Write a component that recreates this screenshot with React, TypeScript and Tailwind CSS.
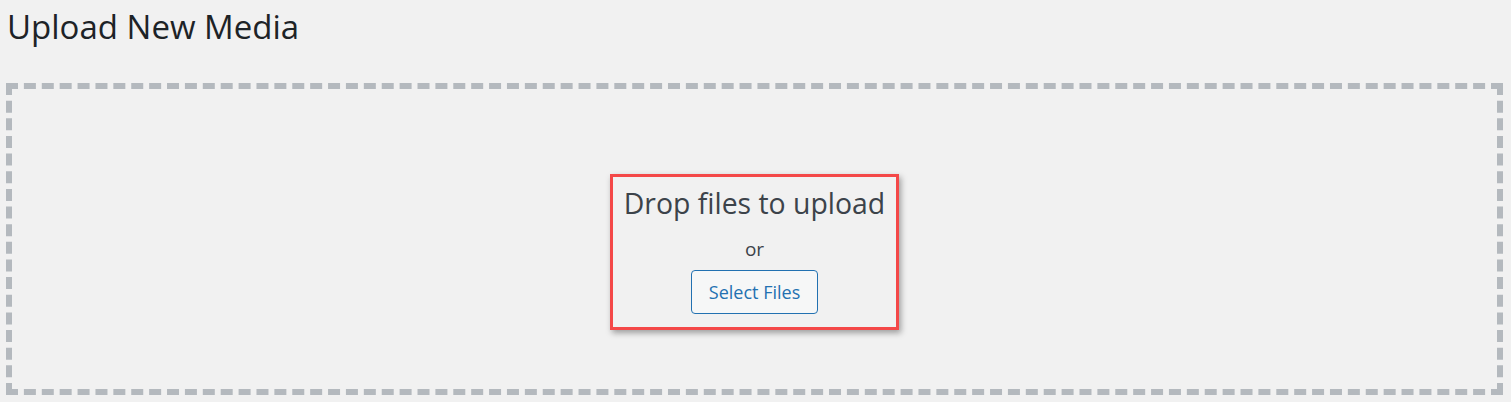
export default function App() {
  return (
    <div className="w-[1511px] h-[402px] bg-[#f1f1f1] overflow-hidden" style={{ fontFamily: '"Open Sans", "Noto Sans", sans-serif' }}>
      <h1 className="h-[83px] pl-[7px] pt-[6px] text-[33px] leading-[42px] text-[#1d2327] font-normal">Upload New Media</h1>
      <div className="ml-[6px] w-[1497px] h-[312px] border-[6px] border-dashed border-[#b4b9be] flex flex-col items-center pt-[85px]">
        <div className="w-[289px] h-[156px] border-[3px] border-[#f44848] shadow-[2px_3px_6px_rgba(0,0,0,0.35)] flex flex-col items-center">
          <div className="mt-[8px] h-[36px] leading-[36px] text-[28.4px] text-[#3c434a]">Drop files to upload</div>
          <div className="mt-[16px] h-[24px] leading-[24px] text-[19px] text-[#3c434a]">or</div>
          <button className="mt-[9px] w-[127px] h-[44px] border-[1.5px] border-[#2271b1] rounded-[4px] bg-[#f6f7f7] text-[#2271b1] text-[18px] leading-[20px]">Select Files</button>
        </div>
      </div>
    </div>
  );
}
